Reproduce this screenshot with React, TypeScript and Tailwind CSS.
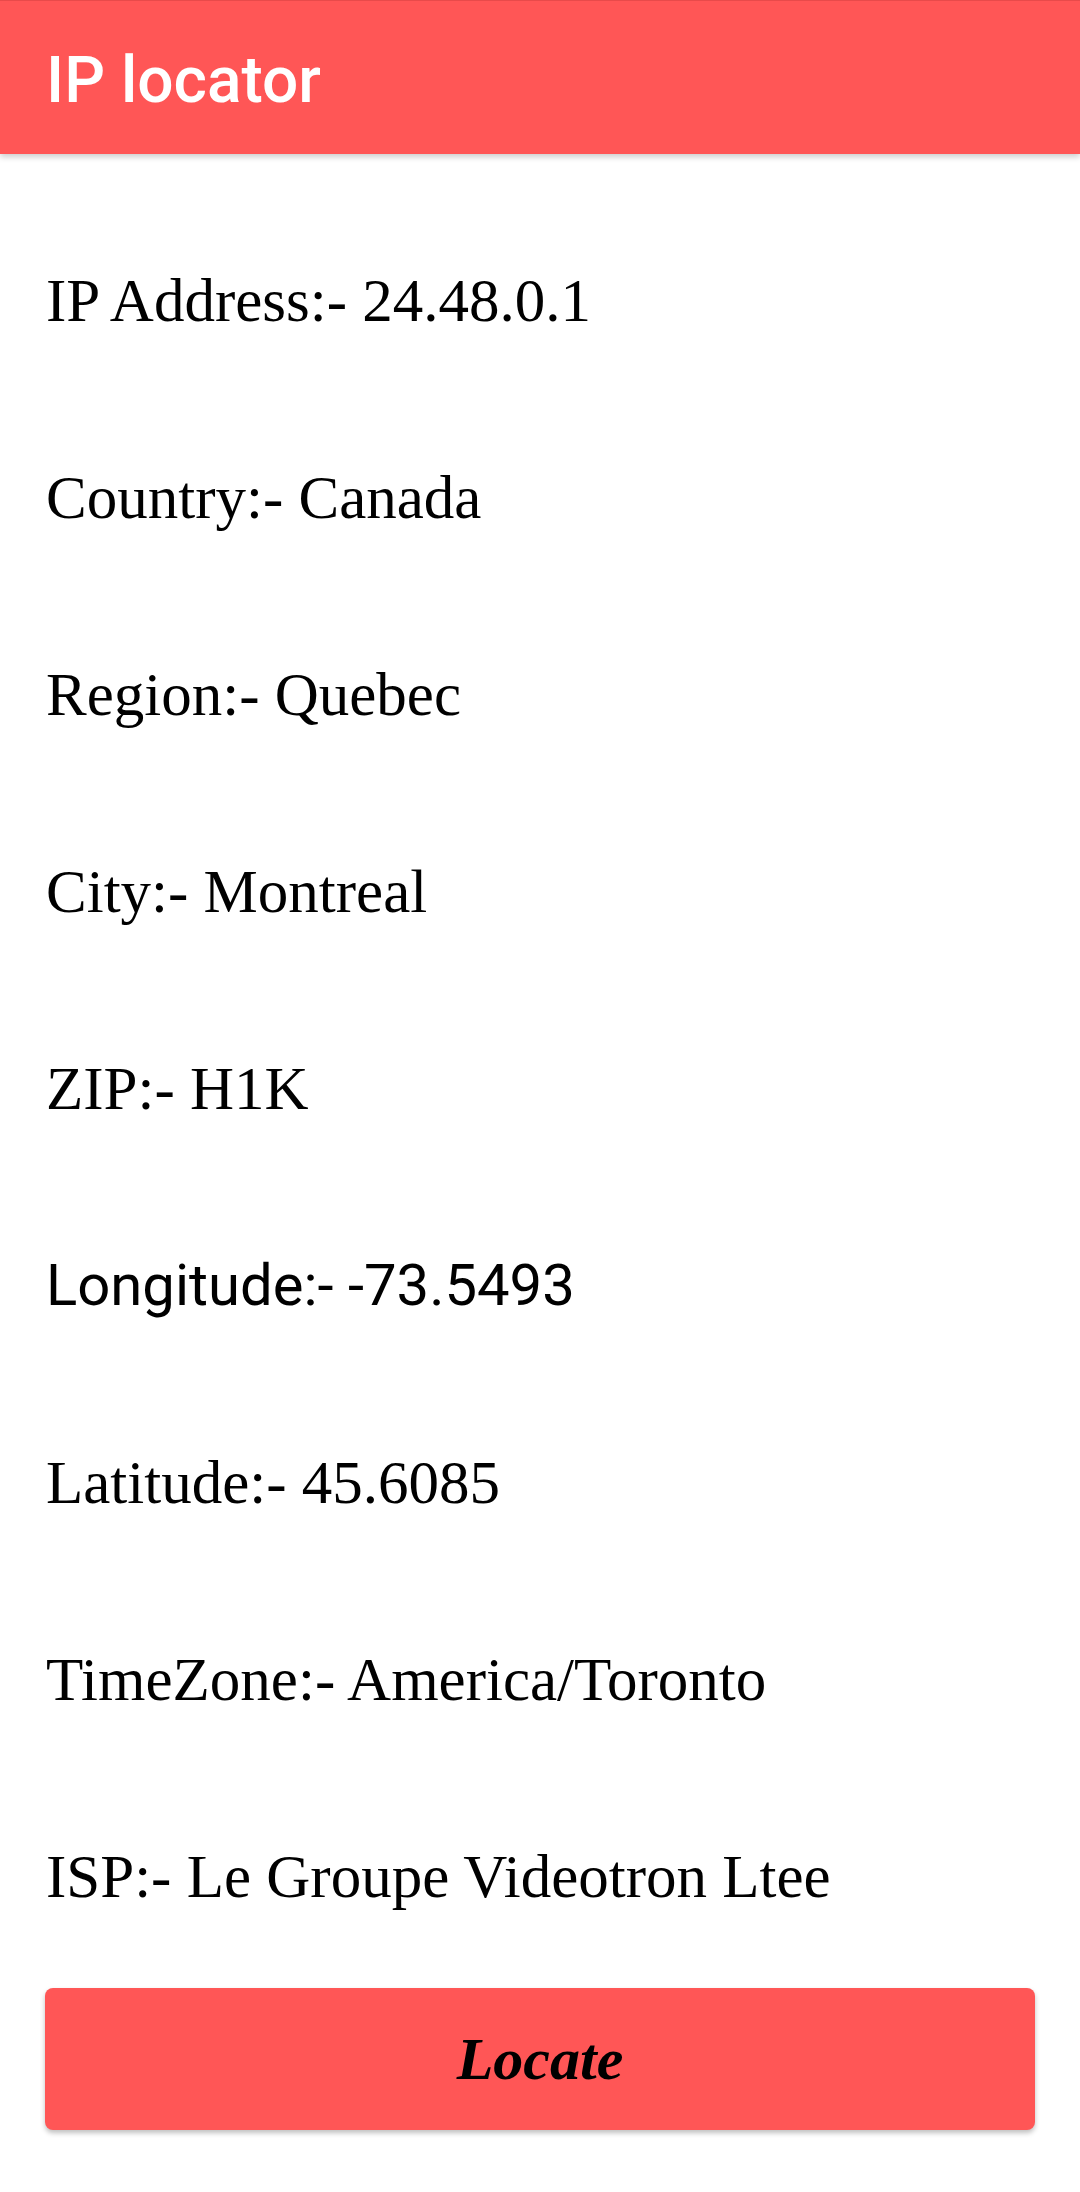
const rows: { label: string; value: string; sans?: boolean }[] = [
  { label: "IP Address", value: "24.48.0.1" },
  { label: "Country", value: "Canada" },
  { label: "Region", value: "Quebec" },
  { label: "City", value: "Montreal" },
  { label: "ZIP", value: "H1K" },
  { label: "Longitude", value: "-73.5493", sans: true },
  { label: "Latitude", value: "45.6085" },
  { label: "TimeZone", value: "America/Toronto" },
  { label: "ISP", value: "Le Groupe Videotron Ltee" },
];

export default function App() {
  return (
    <div className="flex h-[2192px] w-[1080px] flex-col bg-white">
      <header className="relative z-10 flex h-[154px] shrink-0 items-center border-t border-[#e84a4a] bg-[#ff5656] px-[46px] pt-[6px] shadow-[0_3px_6px_rgba(0,0,0,0.2)]">
        <h1 className="font-['Roboto',sans-serif] text-[64px] font-medium leading-none text-white">
          IP locator
        </h1>
      </header>

      <main className="flex flex-col px-[46px] pt-[48px]">
        {rows.map((r) => (
          <div
            key={r.label}
            className={
              r.sans
                ? "flex h-[197px] items-center font-['Roboto',sans-serif] text-[58px] text-black"
                : "flex h-[197px] items-center font-['Liberation_Serif','DejaVu_Serif',serif] text-[61px] text-black [font-variant-numeric:oldstyle-nums]"
            }
          >
            {r.label}:- {r.value}
          </div>
        ))}
      </main>

      <div className="px-[45px] pt-[13px]">
        <button className="flex h-[142px] w-full items-center justify-center rounded-[8px] bg-[#ff5656] shadow-[0_3px_5px_rgba(0,0,0,0.25)]">
          <span className="font-['Liberation_Serif',serif] text-[60px] font-bold italic text-black">
            Locate
          </span>
        </button>
      </div>
    </div>
  );
}
